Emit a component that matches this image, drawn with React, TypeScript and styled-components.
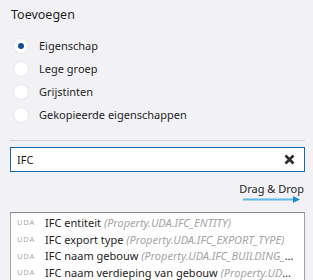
import React, { useState } from 'react';
import styled, { createGlobalStyle } from 'styled-components';

const GlobalStyle = createGlobalStyle`
    html, body {
        margin: 0;
        padding: 0;
        background: #f2f2f6;
        font-family: "Noto Sans", "Open Sans", sans-serif;
        overflow: hidden;
    }
`;

const Panel = styled.div`
    width: 313px;
    height: 280px;
    padding: 0 8px 0 10px;
    box-sizing: border-box;
    display: flex;
    flex-direction: column;
    color: #1e1e1e;

    & > * {
        flex-shrink: 0;
    }
`;

const Title = styled.div`
    font-size: 12.5px;
    line-height: 16px;
    margin-top: 7px;
    margin-left: 1px;
`;

const RadioList = styled.div`
    display: flex;
    flex-direction: column;
    margin-top: 11px;
`;

const RadioRow = styled.label`
    display: flex;
    align-items: center;
    height: 23px;
    font-size: 11px;
    cursor: pointer;
`;

const RadioCircle = styled.span<{ checked: boolean }>`
    width: 14px;
    height: 14px;
    margin-left: 4px;
    margin-right: 11px;
    border-radius: 50%;
    background: #fff;
    box-shadow: 0 0 0 1px #e6e6ec;
    display: flex;
    align-items: center;
    justify-content: center;

    &::after {
        content: '';
        width: 6px;
        height: 6px;
        border-radius: 50%;
        background: ${({ checked }) => (checked ? '#11508f' : 'transparent')};
    }
`;

const Separator = styled.div`
    height: 1px;
    background: #d2d2d6;
    margin-top: 14px;
`;

const SearchBox = styled.div`
    margin-top: 6px;
    height: 25px;
    box-sizing: border-box;
    border: 1px solid #1a66a6;
    background: #fff;
    display: flex;
    align-items: center;
    padding: 0 9px 0 6px;
`;

const SearchInput = styled.input`
    flex: 1;
    border: none;
    outline: none;
    padding: 0;
    font-family: inherit;
    font-size: 11px;
    color: #1e1e1e;
    background: transparent;
`;

const ClearIcon = styled.svg`
    width: 11px;
    height: 11px;
    flex-shrink: 0;
`;

const DragHint = styled.div`
    display: flex;
    flex-direction: column;
    align-items: flex-end;
    margin-top: 10px;
    margin-right: 1px;
    font-size: 11px;
    line-height: 14px;
`;

const Arrow = styled.svg`
    width: 57px;
    height: 7px;
    margin-top: 0;
    margin-right: 4px;
`;

const ListBox = styled.div`
    margin-top: 9px;
    flex: 1 1 0;
    border: 1px solid #a0a0a4;
    border-top-color: #8a8a8e;
    border-bottom: none;
    background: #fff;
    padding: 1px 7px 0 6px;
    overflow: hidden;
`;

const ListRow = styled.div`
    display: flex;
    align-items: center;
    height: 16.7px;
    white-space: nowrap;
    overflow: hidden;
`;

const Badge = styled.span`
    font-size: 7.5px;
    letter-spacing: 0.8px;
    color: #a8a8ac;
    width: 28px;
    flex-shrink: 0;
`;

const RowText = styled.span`
    font-size: 11px;
    overflow: hidden;
    text-overflow: ellipsis;
    min-width: 0;
`;

const Key = styled.span`
    font-style: italic;
    color: #a4a4a8;
`;

const options = ['Eigenschap', 'Lege groep', 'Grijstinten', 'Gekopieerde eigenschappen'];

const properties = [
    { name: 'IFC entiteit', key: 'Property.UDA.IFC_ENTITY' },
    { name: 'IFC export type', key: 'Property.UDA.IFC_EXPORT_TYPE' },
    { name: 'IFC naam gebouw', key: 'Property.UDA.IFC_BUILDING_NAME' },
    { name: 'IFC naam verdieping van gebouw', key: 'Property.UDA.IFC_BUILDING_STOREY_NAME' },
];

export default function App() {
    const [selected, setSelected] = useState(0);
    const [query, setQuery] = useState('IFC');

    return (
        <>
            <GlobalStyle />
            <Panel>
                <Title>Toevoegen</Title>
                <RadioList>
                    {options.map((label, i) => (
                        <RadioRow key={label} onClick={() => setSelected(i)}>
                            <RadioCircle checked={selected === i} />
                            {label}
                        </RadioRow>
                    ))}
                </RadioList>
                <Separator />
                <SearchBox>
                    <SearchInput value={query} onChange={e => setQuery(e.target.value)} />
                    <ClearIcon viewBox="0 0 11 11" onClick={() => setQuery('')}>
                        <path d="M1.5 1.5 L9.5 9.5 M9.5 1.5 L1.5 9.5" stroke="#2c2c30" strokeWidth="2.6" />
                    </ClearIcon>
                </SearchBox>
                <DragHint>
                    Drag &amp; Drop
                    <Arrow viewBox="0 0 57 7">
                        <line x1="0" y1="3.5" x2="51" y2="3.5" stroke="#5cb9e2" strokeWidth="2" />
                        <path d="M50 0 L57 3.5 L50 7 Z" fill="#1c8fd0" />
                    </Arrow>
                </DragHint>
                <ListBox>
                    {properties.map(p => (
                        <ListRow key={p.key}>
                            <Badge>UDA</Badge>
                            <RowText>
                                {p.name} <Key>({p.key})</Key>
                            </RowText>
                        </ListRow>
                    ))}
                </ListBox>
            </Panel>
        </>
    );
}
